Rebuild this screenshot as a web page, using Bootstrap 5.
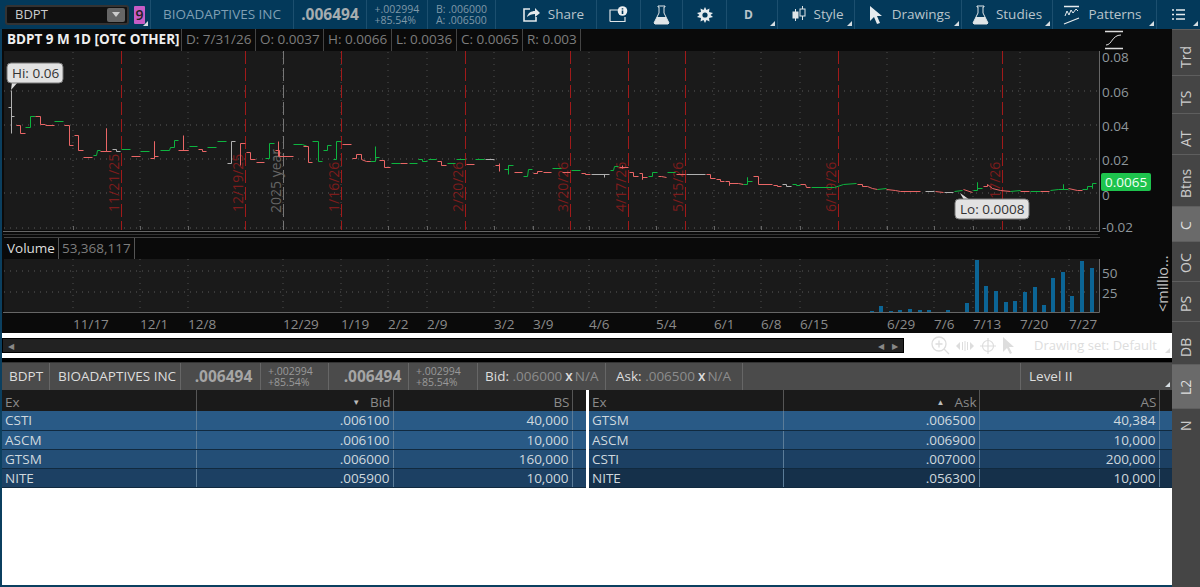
<!DOCTYPE html>
<html lang="en">
<head>
  <meta charset="utf-8">
  <meta name="viewport" content="width=device-width, initial-scale=1">
  <title>BDPT chart</title>
  <link href="https://cdn.jsdelivr.net/npm/bootstrap@5.3.3/dist/css/bootstrap.min.css" rel="stylesheet">
  <script src="https://cdn.jsdelivr.net/npm/bootstrap@5.3.3/dist/js/bootstrap.bundle.min.js"></script>
  <style>
    html, body { height: 100%; }
    body { background: #0b3f5f; font-family: "Open Sans", "Liberation Sans", sans-serif; font-size: 13.5px; overflow: hidden; color: #ccc; }
    svg { overflow: visible; }
    svg text { font-family: "Open Sans", "Liberation Sans", sans-serif; }
    .main { min-height: 0; }
    .left { margin-left: 2px; min-width: 0; }

    /* top toolbar */
    .topbar { height: 29px; background: #03395a; color: #b9c4cb; }
    .tb { height: 100%; position: relative; border-right: 1px solid #1c4f6f; }
    .tb-sym { width: 151px; }
    .tb-name { width: 143px; color: #7f9fb4; }
    .tb-price { width: 73px; font-size: 15.5px; font-weight: 700; color: #a6adb0; }
    .tb-chg { width: 61px; }
    .tb-ba { width: 68px; }
    .tb-share { width: 101px; gap: 7px; padding-left: 14px; }
    .tb-info { width: 44px; }
    .tb-flask { width: 42px; }
    .tb-gear { width: 44px; }
    .tb-d { width: 51px; font-weight: 700; font-size: 12px; padding-right: 7px; }
    .tb-style { width: 77px; gap: 8px; padding-left: 3px; }
    .tb-draw { width: 107px; gap: 9px; padding-left: 3px; }
    .tb-studies { width: 91px; gap: 7px; }
    .tb-patterns { width: 104px; gap: 8px; padding-right: 4px; }
    .tb-list { width: 43px; border-right: 0; }
    .corner::after { content: ""; position: absolute; right: 2px; bottom: 3px; border-style: solid; border-width: 0 0 5px 5px; border-color: transparent transparent #d5dde2 transparent; }
    .symbox { width: 124px; height: 20px; margin-left: 5px; background: #111; border: 2px solid #333; border-radius: 3px; color: #ccc; padding-left: 8px; font-size: 13px; }
    .symbox i { width: 18px; height: 14px; margin-right: 2px; background: #666; border-radius: 2px; }
    .symbox i::after { content: ""; border-style: solid; border-width: 5px 4px 0 4px; border-color: #ccc transparent transparent transparent; }
    .link9 { width: 11px; height: 18px; margin-left: 5px; background: #c65cc6; color: #222; font-size: 14px; font-weight: 600; line-height: 18px; border-radius: 1px; }
    .mini { font-size: 10.5px; line-height: 11px; color: #7f98a8; }

    /* chart */
    .chart { height: 304px; background: #0a0a0a; }
    .head { height: 22px; }
    .head span { height: 22px; line-height: 21px; border-right: 1px solid #444; color: #7d7d7d; padding: 0 4px; white-space: nowrap; }
    .head .title { color: #eee; font-weight: 700; padding-left: 5px; width: 180px; }
    .head .h-d { width: 74px; }
    .head .h-o, .head .h-h { width: 68px; }
    .head .h-l { width: 65px; }
    .head .h-c { width: 66px; }
    .head .h-r { width: 58px; }
    .volhead { height: 22px; border-top: 1px solid #444; margin: 0 72px 0 2px; }
    .volhead span { height: 21px; line-height: 20px; border-right: 1px solid #555; padding: 0 3px; color: #7d7d7d; }
    .volhead .vol { color: #ddd; }
    .curve { margin: 1px 47px 0 0; }

    /* scroller + status */
    .band { height: 25px; background: #fff; padding-top: 5px; position: relative; }
    .band-row { height: 15px; }
    .band::after { content: ""; position: absolute; right: 2px; bottom: 5px; border-style: solid; border-width: 0 0 5px 5px; border-color: transparent transparent #ddd transparent; }
    .scroll { width: 902px; height: 15px; background: #222; border: 1px solid #000; color: #888; font-size: 8px; line-height: 13px; padding: 0 5px; }
    .dset { color: #ddd; font-size: 13px; margin-left: 19px; }
    .tools { margin-left: 27px; gap: 6px; }

    /* level II */
    .l2bar { height: 28px; background: #4b4b4b; border-top: 1px solid #333; position: relative; color: #ddd; }
    .l2bar .c { height: 100%; border-right: 1px solid #666; }
    .l2bar .p { font-size: 15.5px; font-weight: 700; color: #a5a5a5; }
    .l2bar .m { font-size: 10.5px; line-height: 11px; color: #999; padding-left: 7px; }
    .l2bar .g { color: #8d8d8d; }
    .l2bar .x { margin: 0 2px 0 3px; font-weight: 600; }
    .c-sym { width: 48px; padding-left: 7px; }
    .c-name { width: 131px; padding-left: 8px; }
    .c-p1 { width: 80px; padding-left: 6px; }
    .c-m1 { width: 68px; }
    .c-p2 { width: 80px; padding-left: 8px; }
    .c-m2 { width: 69px; }
    .c-bid { width: 128px; padding-left: 7px; }
    .c-ask { width: 137px; padding-left: 10px; }
    .c-gap { width: 278px; }
    .divider { background: #000; height: 4px; }
    .books { background: #fff; }
    .book { table-layout: fixed; width: auto; margin: 0; border-collapse: collapse; }
    .book th, .book td { height: 19px; padding: 0 3px; line-height: 18px; font-weight: 400; border-top: 0; border-bottom: 1px solid #112a3f; border-right: 1px solid #5b7c98; color: #cfd8de; background: transparent; box-shadow: none; white-space: nowrap; overflow: hidden; }
    .book th { background: #1a1a1a; color: #8a8a8a; border-bottom: 0; border-right: 1px solid #555; height: 21px; padding-right: 2px; }
    .book .tri { font-size: 8px; margin-right: 10px; vertical-align: 2px; color: #bbb; }
    .book td.sp, .book th.sp { border-right: 0; padding: 0; }
    .w194 { width: 194px; } .w196 { width: 196px; } .w197 { width: 197px; }
    .w179 { width: 179px; } .w180 { width: 180px; } .w14 { width: 14px; } .w13 { width: 13px; }
    .q1 td { background: #295a86; }
    .q2 td { background: #234e76; }
    .q3 td { background: #1c4063; }
    .q4 td { background: #15304a; }
    .midline { width: 3px; background: #fff; }
    .rest { background: #fff; }
    .foot { height: 2px; }

    /* right tabs, text sits low in each tab */
    .tabs { width: 28px; background: #454545; }
    .tabs div { color: #ccc; border-bottom: 1px solid #5e5e5e; writing-mode: vertical-rl; transform: rotate(180deg); font-size: 14px; text-align: center; line-height: 28px; }
    .tabs .on { background: #6a6a6a; color: #ddd; }
    .t-trd { height: 46px; padding-bottom: 10px; }
    .t-ts { height: 38px; padding-bottom: 8px; }
    .t-at { height: 41px; padding-bottom: 10px; }
    .t-btns { height: 52px; padding-bottom: 5px; }
    .t-c { height: 35px; padding-bottom: 4px; }
    .t-oc { height: 40px; padding-bottom: 4px; }
    .t-ps { height: 40px; padding-bottom: 5px; }
    .t-db { height: 43px; padding-bottom: 8px; }
    .t-l2 { height: 44px; padding-bottom: 2px; }
    .t-n { height: 34px; }
  </style>
</head>
<body class="m-0 d-flex flex-column">

<!-- top toolbar -->
<div class="topbar d-flex flex-shrink-0">
  <div class="tb tb-sym corner d-flex align-items-center">
    <div class="symbox d-flex align-items-center justify-content-between">BDPT<i class="d-flex align-items-center justify-content-center"></i></div>
    <div class="link9 text-center">9</div>
  </div>
  <div class="tb tb-name d-flex align-items-center justify-content-center">BIOADAPTIVES INC</div>
  <div class="tb tb-price d-flex align-items-center justify-content-center">.006494</div>
  <div class="tb tb-chg mini d-flex align-items-center justify-content-center"><div>+.002994<br>+85.54%</div></div>
  <div class="tb tb-ba mini d-flex align-items-center justify-content-center"><div>B: .006000<br>A: .006500</div></div>
  <div class="tb tb-share d-flex align-items-center justify-content-center">
    <svg width="19" height="17" viewBox="0 0 19 17" fill="none" stroke="#e4e9ec" stroke-width="1.6"><path d="M8 3H2v12h12v-4"/><path d="M5 11c1-4 4-6 8-6V2l5 5-5 4V8c-3 0-6 1-8 3z" fill="#e4e9ec" stroke="none"/></svg>
    <span>Share</span>
  </div>
  <div class="tb tb-info d-flex align-items-center justify-content-center">
    <svg width="19" height="17" viewBox="0 0 19 17" fill="none" stroke="#dfe5e8" stroke-width="1.2"><path d="M1 15.5V4h8M1 15.5h15V11"/><circle cx="13.5" cy="5" r="4.8" fill="#eef1f3" stroke="none"/><path d="M13.5 2.2v1.4M13.5 4.6V8" stroke="#03395a" stroke-width="1.6"/></svg>
  </div>
  <div class="tb tb-flask d-flex align-items-center justify-content-center">
    <svg width="17" height="20" viewBox="0 0 17 20"><path d="M5 1h7v1h-1v6l5 10-1 1H2l-1-1 5-10V2H5z" fill="none" stroke="#dfe5e8"/><path d="M4 12h9l3 6-1 1H2l-1-1z" fill="#dfe5e8"/></svg>
  </div>
  <div class="tb tb-gear d-flex align-items-center justify-content-center">
    <svg width="16" height="16" viewBox="0 0 16 16"><path d="M8 0l1.5 3 3-1.5-.5 3.5 4 1-2.5 2 2.5 2-4 1 .5 3.5-3-1.5L8 16l-1.5-3-3 1.500.5-3.500-4-1L2.500 8 0 6l4-1-.5-3.500 3 1.500z" fill="#e6ebee"/><circle cx="8" cy="8" r="2.600" fill="#03395a"/></svg>
  </div>
  <div class="tb tb-d corner d-flex align-items-center justify-content-center">D</div>
  <div class="tb tb-style corner d-flex align-items-center justify-content-center">
    <svg width="14" height="19" viewBox="0 0 14 19" fill="none" stroke="#dfe5e8"><path d="M3.500 4v12M10.500 1v14"/><rect x="1" y="7" width="5" height="6" fill="#dfe5e8"/><rect x="8" y="4" width="5" height="7" fill="#03395a"/></svg>
    <span>Style</span>
  </div>
  <div class="tb tb-draw corner d-flex align-items-center justify-content-center">
    <svg width="14" height="19" viewBox="0 0 14 19"><path d="M1 1l12 10H8l3 7-3 1-3-7-4 4z" fill="#e6ebee"/></svg>
    <span>Drawings</span>
  </div>
  <div class="tb tb-studies corner d-flex align-items-center justify-content-center">
    <svg width="17" height="20" viewBox="0 0 17 20"><path d="M5 1h7v1h-1v6l5 10-1 1H2l-1-1 5-10V2H5z" fill="none" stroke="#dfe5e8"/><path d="M4 12h9l3 6-1 1H2l-1-1z" fill="#dfe5e8"/></svg>
    <span>Studies</span>
  </div>
  <div class="tb tb-patterns corner d-flex align-items-center justify-content-center">
    <svg width="17" height="20" viewBox="0 0 17 20" fill="none" stroke="#e6ebee" stroke-width="1.3"><path d="M1 1.500h15M1 19l15-6"/><path d="M2 11l2-5 2 4 2-5 2 3 3-4 2 2" stroke-width="1"/></svg>
    <span>Patterns</span>
  </div>
  <div class="tb tb-list corner d-flex align-items-center justify-content-center">
    <svg width="13" height="13" viewBox="0 0 13 13" fill="none" stroke="#e6ebee" stroke-width="1.5"><path d="M0 2h2M4 2h9M0 6.500h2M4 6.500h9M0 11h2M4 11h9"/></svg>
  </div>
</div>

<div class="main d-flex flex-grow-1">
  <!-- left column -->
  <div class="left flex-grow-1 d-flex flex-column">
    <div class="chart flex-shrink-0">
      <div class="head d-flex">
        <span class="title">BDPT 9 M 1D [OTC OTHER]</span><span class="h-d">D: 7/31/26</span><span class="h-o">O: 0.0037</span><span class="h-h">H: 0.0066</span><span class="h-l">L: 0.0036</span><span class="h-c">C: 0.0065</span><span class="h-r">R: 0.003</span>
        <svg class="curve ms-auto" width="22" height="20" viewBox="0 0 22 20" fill="none" stroke="#ddd" stroke-width="1.5"><path d="M2 1.500h18M2 18.500h18"/><path d="M3 15c6 0 6-10 15-10" stroke-width="1"/></svg>
      </div>
      <svg id="price" class="d-block" width="1170" height="186" viewBox="2 51 1170 186"></svg>
      <div class="volhead d-flex"><span class="vol">Volume</span><span>53,368,117</span></div>
      <svg id="volume" class="d-block" width="1170" height="74" viewBox="2 259 1170 74"></svg>
    </div>

    <div class="band flex-shrink-0">
      <div class="band-row d-flex align-items-center">
        <div class="scroll d-flex justify-content-between"><span>&#9664;</span><span>&#9664;&nbsp;&nbsp;&nbsp;&nbsp;&#9654;</span></div>
        <div class="tools d-flex align-items-center">
          <svg width="19" height="19" viewBox="0 0 19 19" fill="none" stroke="#ddd" stroke-width="1.3"><circle cx="8" cy="8" r="7"/><path d="M8 4.500v7M4.500 8h7M13 13l5 5"/></svg>
          <svg width="18" height="12" viewBox="0 0 18 12" fill="#ddd"><path d="M0 6l4-4v8zM18 6l-4-4v8z"/><path d="M6 2h1v8H6zM8.500 1h1v10h-1zM11 2h1v8h-1z"/></svg>
          <svg width="16" height="16" viewBox="0 0 16 16" fill="none" stroke="#ddd" stroke-width="1.2"><circle cx="8" cy="8" r="5.500"/><path d="M8 0v16M0 8h16"/></svg>
          <svg width="13" height="17" viewBox="0 0 13 17"><path d="M1 0l11 10H7l3 6-2 1-3-6-4 4z" fill="#ddd"/></svg>
        </div>
        <div class="dset">Drawing set: Default</div>
      </div>
    </div>
    <div class="divider flex-shrink-0"></div>

    <div class="l2bar d-flex align-items-center flex-shrink-0 corner">
      <div class="c c-sym d-flex align-items-center">BDPT</div>
      <div class="c c-name d-flex align-items-center">BIOADAPTIVES INC</div>
      <div class="c p c-p1 d-flex align-items-center justify-content-center">.006494</div>
      <div class="c m c-m1 d-flex align-items-center"><div>+.002994<br>+85.54%</div></div>
      <div class="c p c-p2 d-flex align-items-center justify-content-center">.006494</div>
      <div class="c m c-m2 d-flex align-items-center"><div>+.002994<br>+85.54%</div></div>
      <div class="c c-bid d-flex align-items-center">Bid:&nbsp;<span class="g">.006000</span><span class="x">x</span><span class="g">N/A</span></div>
      <div class="c c-ask d-flex align-items-center">Ask:&nbsp;<span class="g">.006500</span><span class="x">x</span><span class="g">N/A</span></div>
      <div class="c c-gap"></div>
      <div class="ps-2">Level II</div>
    </div>

    <div class="books d-flex flex-shrink-0">
      <table class="table book">
        <colgroup><col class="w194"><col class="w197"><col class="w179"><col class="w14"></colgroup>
        <thead><tr><th>Ex</th><th class="text-end"><span class="tri">&#9660;</span>Bid</th><th class="text-end">BS</th><th class="sp"></th></tr></thead>
        <tbody id="bids"></tbody>
      </table>
      <div class="midline"></div>
      <table class="table book">
        <colgroup><col class="w194"><col class="w196"><col class="w180"><col class="w13"></colgroup>
        <thead><tr><th>Ex</th><th class="text-end"><span class="tri">&#9650;</span>Ask</th><th class="text-end">AS</th><th class="sp"></th></tr></thead>
        <tbody id="asks"></tbody>
      </table>
    </div>
    <div class="rest flex-grow-1"></div>
    <div class="foot"></div>
  </div>

  <!-- right tabs -->
  <div class="tabs flex-shrink-0">
    <div class="t-trd">Trd</div>
    <div class="t-ts">TS</div>
    <div class="t-at">AT</div>
    <div class="t-btns">Btns</div>
    <div class="t-c on">C</div>
    <div class="t-oc">OC</div>
    <div class="t-ps">PS</div>
    <div class="t-db">DB</div>
    <div class="t-l2 on">L2</div>
    <div class="t-n">N</div>
  </div>
</div>

<script>
  // Order book rows
  const bids=[['CSTI','.006100','40,000','q1'],['ASCM','.006100','10,000','q1'],['GTSM','.006000','160,000','q2'],['NITE','.005900','10,000','q3']];
  const asks=[['GTSM','.006500','40,384','q1'],['ASCM','.006900','10,000','q2'],['CSTI','.007000','200,000','q3'],['NITE','.056300','10,000','q4']];
  function fillBook(id,rows){
    document.getElementById(id).innerHTML=rows.map(r=>`<tr class="${r[3]}"><td>${r[0]}</td><td class="text-end">${r[1]}</td><td class="text-end">${r[2]}</td><td class="sp"></td></tr>`).join('');
  }
  fillBook('bids',bids);
  fillBook('asks',asks);

  // Shared chart data, all in page pixel coordinates
  const ticks=[73,140,188,283,341,388,427,494,533,589,656,714,761,800,887,934,973,1020,1069];
  const dates=['11/17','12/1','12/8','12/29','1/19','2/2','2/9','3/2','3/9','4/6','5/4','6/1','6/8','6/15','6/29','7/6','7/13','7/20','7/27'];
  const months=[[121,'11/21/25'],[245,'12/19/25'],[341,'1/16/26'],[465,'2/20/26'],[570,'3/20/26'],[628,'4/17/26'],[685,'5/15/26'],[838,'6/19/26'],[1002,'7/17/26']];
  const R='#ea6666',G='#0db43f',W='#b0b0b0';
  const bars=[
    [W,'11,90 11,133'],[W,'8,107 11,107'],[W,'11,116 14,116'],
    [R,'16,125 20,125 20,133 25,133'],[G,'25,127 30,127 30,116 35,116'],[R,'35,116 40,116 40,124 45,124'],[R,'45,125 54,125'],[G,'54,121 63,121'],
    [R,'64,125 69,125 69,145 73,145'],[R,'74,135 78,135 78,150 83,150'],[R,'83,157 92,157'],[G,'93,155 96,155 97,150 100,150'],
    [R,'100,151 106,151 106,128 106,151 111,151'],[W,'112,149 116,149 116,151 120,151'],[G,'121,149 130,149'],[R,'131,156 140,156'],[G,'140,151 149,151'],
    [R,'150,158 154,158 154,141 154,156 158,156'],[G,'160,150 169,150 170,147 174,147 174,140 178,140'],[R,'183,135 183,150 188,150 178,150'],
    [G,'189,146 197,146'],[R,'198,149 202,149 202,151 206,151'],[G,'207,147 216,147'],[G,'217,141 226,141'],
    [W,'227,163 231,163 231,141 235,141'],[R,'240,165 240,143 245,143'],[R,'246,152 250,152 250,159 255,159'],[R,'256,162 264,162'],[G,'265,158 269,158 269,143 274,143'],
    [R,'275,150 279,150 279,156 293,156'],[R,'278,141 278,156'],[G,'293,144 302,144 307,146'],[R,'303,146 308,146 308,162 312,162'],[G,'312,141 318,141 318,161 322,161'],
    [G,'323,150 327,150 327,145 331,145'],[G,'333,159 336,159 336,141 341,141'],[R,'342,144 351,144'],
    [R,'352,158 356,158 356,154 361,154 361,159 366,161 374,161'],[G,'370,161 375,161 375,146'],[G,'375,157 379,157'],[R,'379,160 384,160 384,167 390,167'],[G,'391,163 400,163'],
    [R,'400,163 407,163'],[G,'409,163 417,163'],[G,'418,159 422,159 422,161 427,161'],[G,'428,159 436,159'],[R,'437,161 441,161 441,165 446,165'],[G,'447,163 455,163'],[G,'456,159 465,159'],
    [R,'466,164 474,164'],[G,'475,159 484,159'],[W,'485,159 494,159'],[R,'495,165 499,165'],[R,'499,163 499,171'],[G,'504,169 508,169 508,165 513,165'],[G,'508,165 508,174'],
    [R,'514,172 522,172'],[G,'523,176 527,176 528,169 532,169'],[R,'533,173 537,173 537,171 542,171'],[R,'543,172 551,172'],[G,'552,168 561,168'],[R,'562,172 570,172'],[G,'571,170 580,170'],
    [R,'581,173 585,173 585,174 590,174'],[W,'591,174 609,174'],[W,'604,174 604,177'],[G,'610,170 613,170 614,166 618,166'],[R,'619,167 628,167'],[R,'622,165 622,168'],
    [R,'629,172 633,172 633,176 638,176'],[R,'639,173 642,173 642,179 642,177 647,177'],[G,'648,176 652,176 652,172 657,172'],[R,'658,176 661,176 666,177'],[G,'667,172 675,172'],[R,'676,174 685,174'],
    [W,'686,174 705,174'],[R,'706,174 710,174 710,178 715,178'],[R,'716,179 720,179 720,181 724,181'],[R,'725,181 729,181 729,185 729,183 738,183 743,184'],[G,'743,184 747,184 747,177 747,181 752,181'],
    [R,'753,176 758,176 758,184 772,184'],[R,'773,185 777,185 777,186 781,186'],[W,'782,184 786,184 786,186 791,186'],[G,'792,184 796,184 796,185 800,185'],
    [R,'800,184 805,184 806,187 810,187'],[G,'811,187 834,187 843,184 856,183'],[R,'857,184 862,184 862,186 867,186 872,188 877,189'],[G,'877,189 886,188'],[R,'886,189 895,190 900,191 920,191'],
    [W,'925,191 934,191'],[R,'935,191 943,192'],[W,'944,192 953,192'],[G,'954,191 962,190'],[R,'963,189 972,192'],[G,'973,190 977,190 977,182 977,188 982,188'],
    [R,'983,186 987,186 987,184 992,188 1000,190 1010,191'],[G,'1010,191 1020,190'],[R,'1020,191 1029,191'],[G,'1030,191 1040,191'],[R,'1040,191 1049,191'],
    [G,'1050,190 1058,189 1063,189 1063,184 1063,189 1068,189'],[R,'1068,188 1077,190 1082,190'],[G,'1082,189 1087,189 1087,186 1092,186 1092,188 1092,183 1096,183']
  ];
  const volumes=[[872,311],[881,306],[891,311],[900,310],[910,309],[920,310],[929,310],[948,310],[967,303],[977,260],[986,286],[996,291],[1006,302],[1015,301],[1025,292],[1035,287],[1044,305],[1053,278],[1063,272],[1072,296],[1082,261],[1092,268]];

  // Dashed vertical as solid rects, keeps the colour on the pixel grid
  function dashes(x,color){
    let s='';
    for(let y=51;y<230;y+=17){
      s+=`<rect x="${x}" y="${y}" width="1" height="${Math.min(13,230-y)}" fill="${color}"/>`;
    }
    return s;
  }

  // Price pane
  let p=`<rect x="4" y="51" width="1095" height="179" fill="#1a1a1a"/>`;
  [91,125,159,193,228].forEach(y=>{p+=`<path d="M4 ${y}H1099" stroke="#5a5a5a" stroke-dasharray="1 5"/>`});
  ticks.forEach(x=>{p+=`<path d="M${x} 52V230" stroke="#4e4e4e" stroke-dasharray="1 5"/><path d="M${x+.5} 226V230" stroke="#666"/>`});
  months.forEach(m=>{
    p+=dashes(m[0],'#a01a1a');
    p+=`<text transform="translate(${m[0]-2} 212) rotate(-90)" font-size="14" fill="#7d1c1c">${m[1]}</text>`;
  });
  p+=dashes(283,'#777');
  p+=`<text transform="translate(281 213) rotate(-90)" font-size="14" fill="#666">2025 year</text>`;
  bars.forEach(b=>{p+=`<polyline points="${b[1]}" transform="translate(.5 .5)" fill="none" stroke="${b[0]}" stroke-width="1"/>`});
  // Bubbles
  p+=`<path d="M11 90l1-8h6z" fill="#ddd"/><rect x="7" y="63" width="56" height="20" rx="4" fill="#e2e2e2" stroke="#777"/><text x="12" y="78" font-size="13.5" fill="#333">Hi: 0.06</text>`;
  p+=`<path d="M960 193l4 7h6z" fill="#ddd"/><rect x="955" y="199" width="74" height="20" rx="4" fill="#e2e2e2" stroke="#777"/><text x="960" y="214" font-size="13.5" fill="#333">Lo: 0.0008</text>`;
  // Axis
  p+=`<path d="M3 231.5H1099.5V51" fill="none" stroke="#666"/><path d="M3 234.5H1098" stroke="#333"/>`;
  [['0.08',62],['0.06',97],['0.04',131],['0.02',165],['0',200],['-0.02',232]].forEach(t=>{p+=`<text x="1102" y="${t[1]}" font-size="13.5" fill="#8f979c">${t[0]}</text>`});
  p+=`<rect x="1101" y="173" width="50" height="18" rx="2" fill="#1ec34d"/><text x="1105" y="187" font-size="13.5" fill="#f2fff5">0.0065</text>`;
  document.getElementById('price').innerHTML=p;

  // Volume pane and date axis
  let v=`<rect x="4" y="259" width="1095" height="53" fill="#1a1a1a"/>`;
  [271,292].forEach(y=>{v+=`<path d="M4 ${y}H1099" stroke="#5a5a5a" stroke-dasharray="1 5"/>`});
  ticks.forEach((x,i)=>{
    v+=`<path d="M${x} 259V312" stroke="#4e4e4e" stroke-dasharray="1 5"/>`;
    v+=`<text x="${x}" y="329" font-size="13.5" fill="#8a8a8a">${dates[i]}</text>`;
  });
  volumes.forEach(b=>{v+=`<rect x="${b[0]-2}" y="${b[1]}" width="4" height="${312-b[1]}" fill="#0c6595"/>`});
  v+=`<path d="M3 312.5H1099.5V259" fill="none" stroke="#666"/>`;
  v+=`<text x="1102" y="278" font-size="13.5" fill="#8f979c">50</text><text x="1102" y="298" font-size="13.5" fill="#8f979c">25</text>`;
  v+=`<text transform="translate(1168 312) rotate(-90)" font-size="14.5" fill="#c4c4c4">&lt;millio...</text>`;
  document.getElementById('volume').innerHTML=v;
</script>
</body>
</html>
